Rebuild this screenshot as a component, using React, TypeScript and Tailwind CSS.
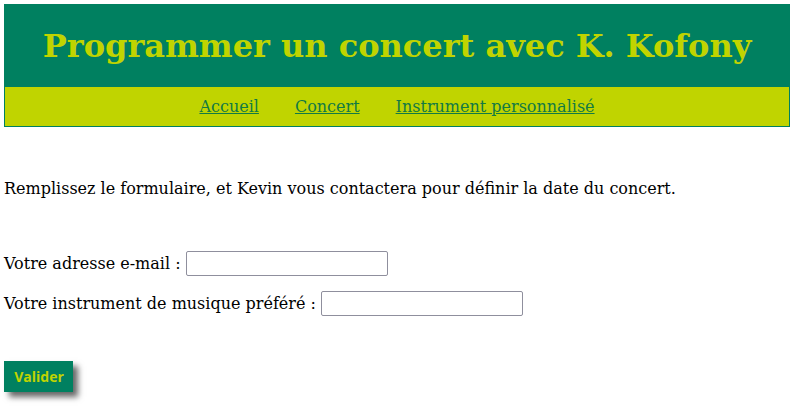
import React from 'react';

const links = ['Accueil', 'Concert', 'Instrument personnalisé'];

const Field: React.FC<{ label: string }> = ({ label }) => (
  <div className="flex h-[25px] items-center">
    <span>{label}&nbsp;:&nbsp;</span>
    <input
      type="text"
      className="h-[25px] w-[202px] rounded-[2px] border border-[#8f8f9d] bg-white px-1"
    />
  </div>
);

export default function App() {
  return (
    <div className="min-h-[413px] bg-white p-1 font-['DejaVu_Serif',serif] text-[16px] text-black">
      <header className="flex h-[83px] items-center justify-center bg-[#008060]">
        <h1 className="text-[32px] font-bold leading-none text-[#c0d400]">
          Programmer un concert avec K. Kofony
        </h1>
      </header>
      <nav className="flex h-[40px] items-center justify-center gap-[36px] border-x border-b border-[#008060] bg-[#c0d400]">
        {links.map((l) => (
          <a key={l} href="#" className="text-[#127a44] underline">
            {l}
          </a>
        ))}
      </nav>

      <p className="mt-[52px] leading-[19px]">
        Remplissez le formulaire, et Kevin vous contactera pour définir la date du concert.
      </p>

      <form className="mt-[53px] flex flex-col gap-[15px]">
        <Field label="Votre adresse e-mail" />
        <Field label="Votre instrument de musique préféré" />
        <button
          type="button"
          className="mt-[30px] h-[31px] w-[69px] bg-[#008060] pl-[1px] font-['Open_Sans',sans-serif] text-[14px] font-bold text-[#c0d400] shadow-[5px_5px_6px_rgba(0,0,0,0.6)]"
        >
          Valider
        </button>
      </form>
    </div>
  );
}
